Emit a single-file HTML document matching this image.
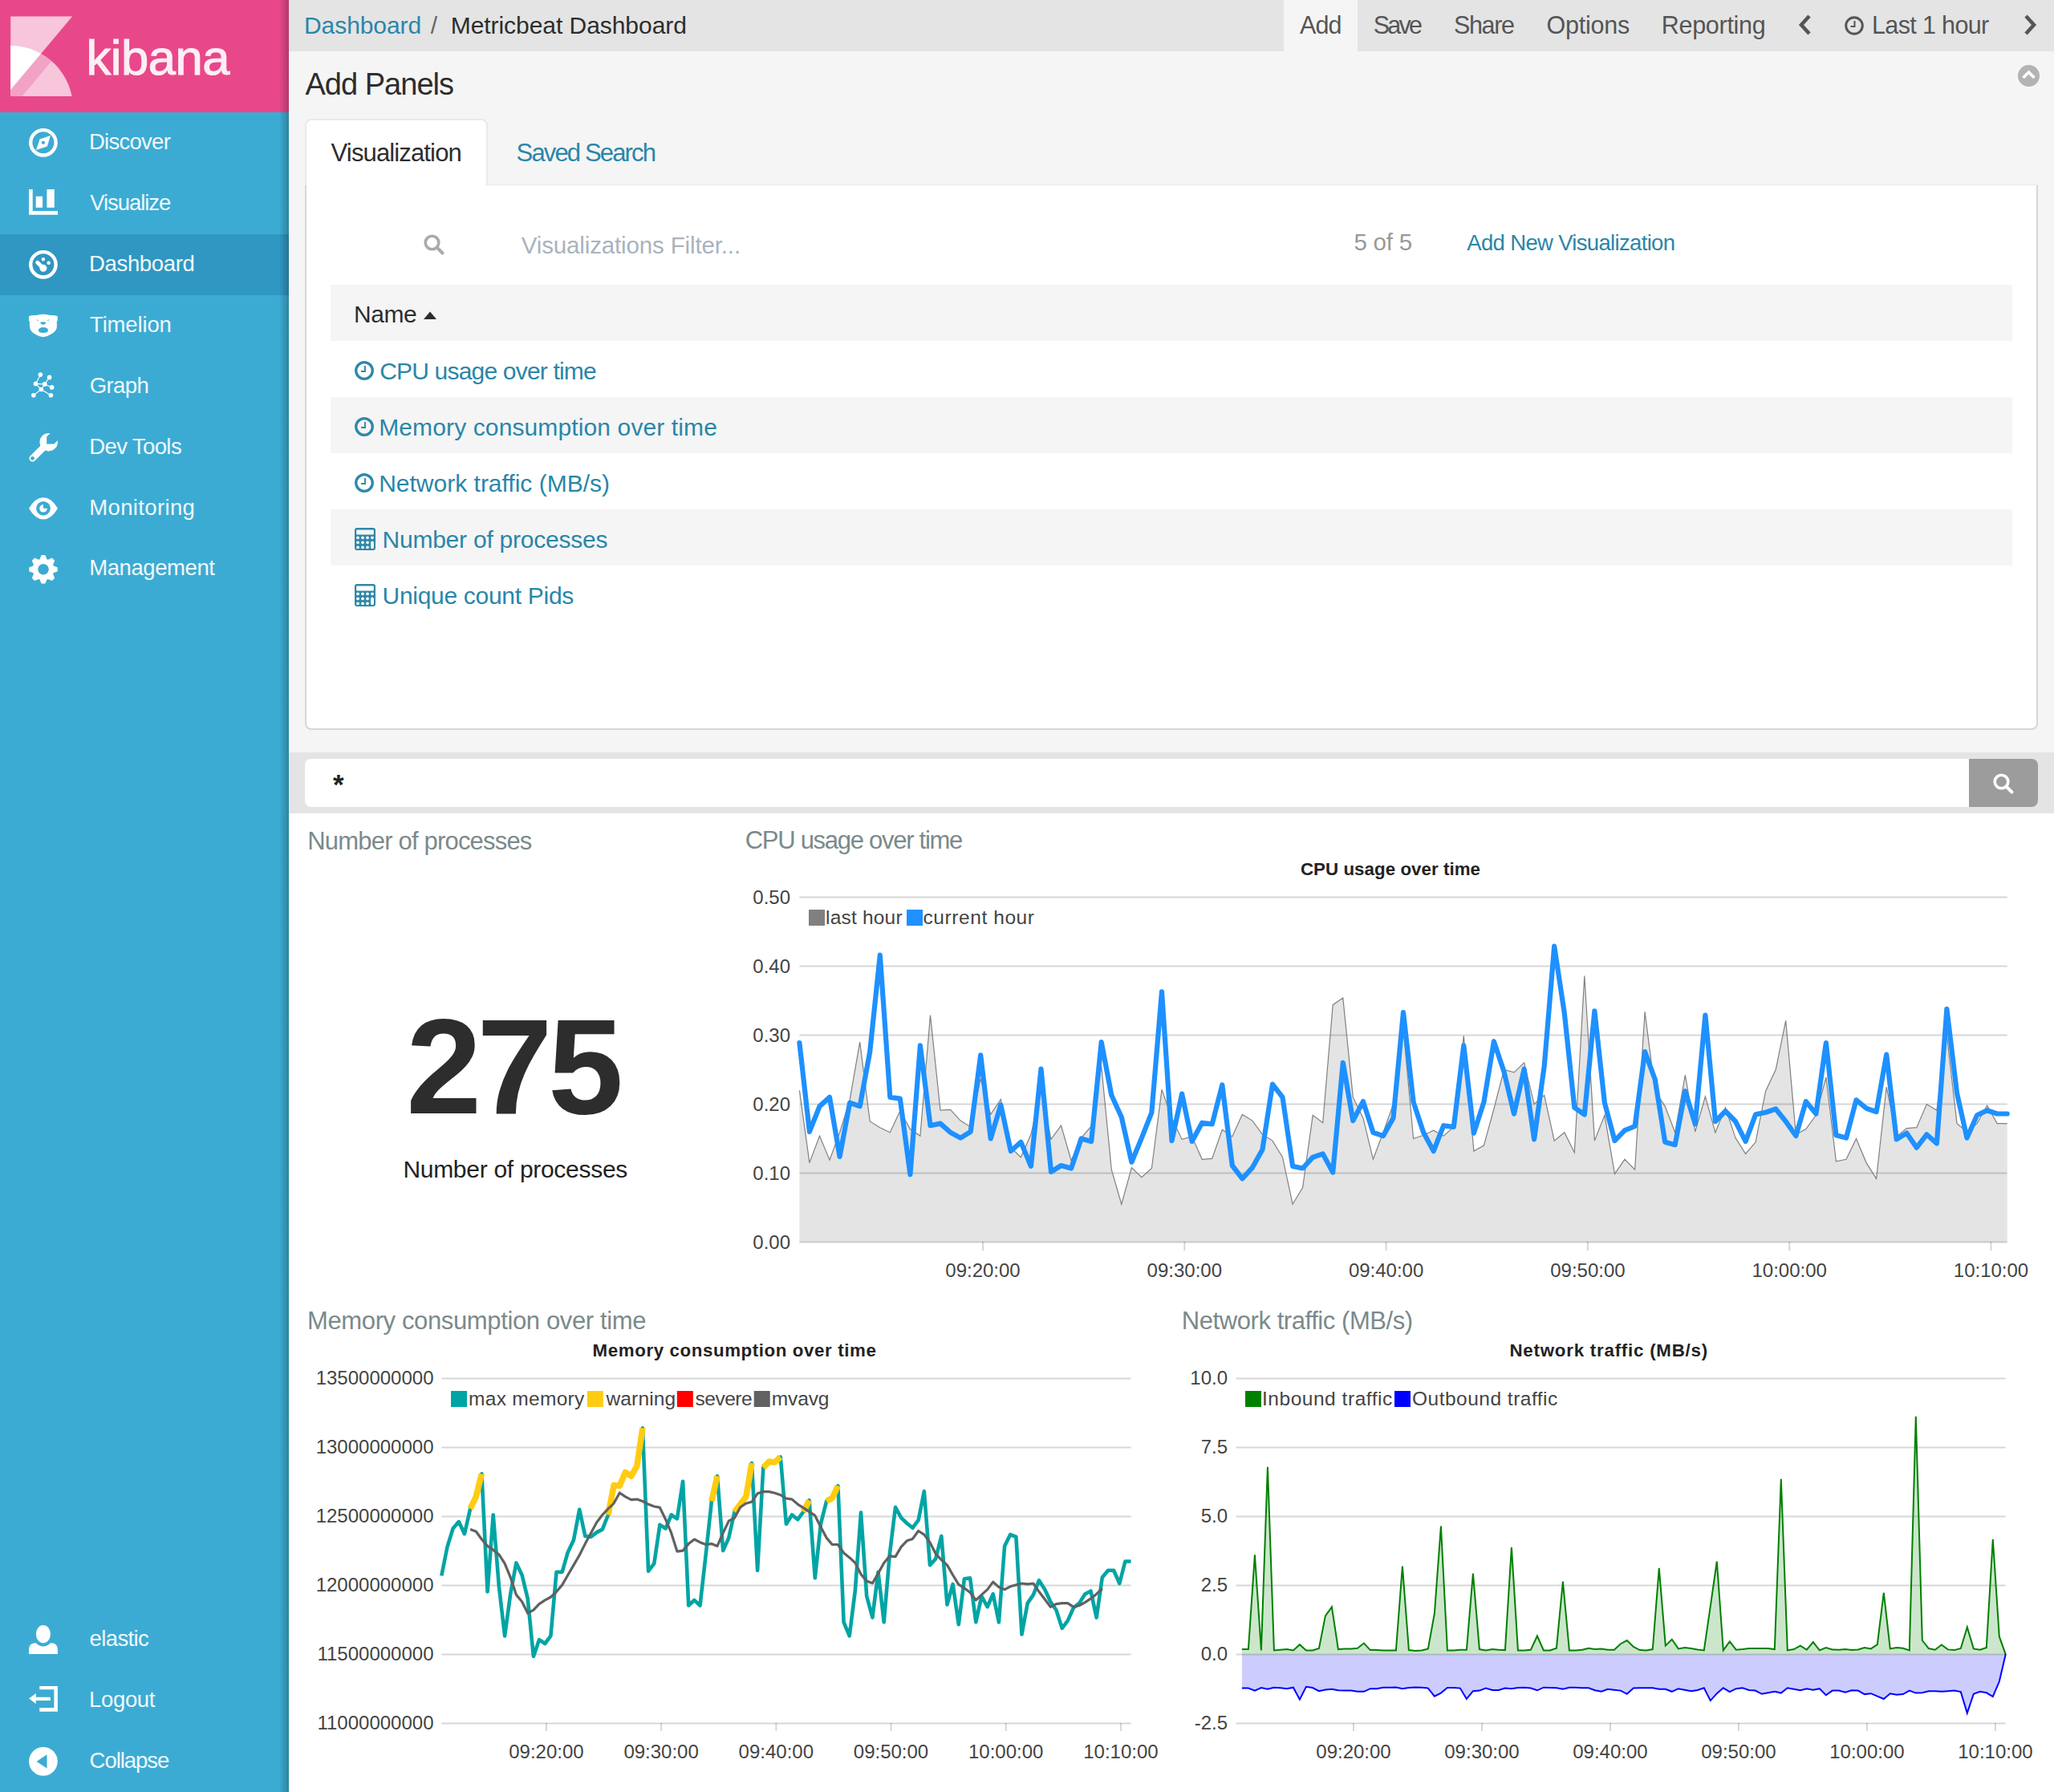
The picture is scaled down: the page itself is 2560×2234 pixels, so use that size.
<!DOCTYPE html>
<html><head><meta charset="utf-8">
<style>
*{box-sizing:border-box;margin:0;padding:0}
html,body{width:2560px;height:2234px;overflow:hidden;background:#fff;font-family:"Liberation Sans",sans-serif}
.a{position:absolute;white-space:nowrap;line-height:1}
.b{position:absolute}
svg{position:absolute;overflow:visible}
</style></head><body>
<div class="b" style="left:0;top:0;width:360px;height:2234px;background:#3cabd3"></div>
<div class="b" style="left:0;top:0;width:360px;height:140px;background:#e8488a"></div>
<div class="b" style="left:0;top:292px;width:360px;height:76px;background:#2f97c2"></div>
<svg style="left:0;top:0" width="100" height="140" viewBox="0 0 100 140">
  <defs><clipPath id="box"><rect x="13.1" y="20.2" width="77.2" height="99.8"/></clipPath>
  <clipPath id="arc"><circle cx="13.1" cy="135" r="78"/></clipPath></defs>
  <g clip-path="url(#box)">
    <polygon points="13.1,20.2 90.3,20.2 13.1,112.2" fill="#f7c6da"/>
    <g clip-path="url(#arc)">
      <rect x="13" y="20" width="80" height="100" fill="#f7c6da"/>
      <polygon points="13.1,20.2 90.3,20.2 13.1,112.2" fill="#ffffff"/>
      <polygon points="90.3,20.2 13.1,112.2 13.1,125 27.2,120.5 111,20.2" fill="#f2a3c5"/>
    </g>
  </g>
</svg>
<svg style="left:36px;top:160px" width="36" height="36" viewBox="0 0 36 36"><circle cx="17.9" cy="17.8" r="15.7" fill="none" stroke="#fff" stroke-width="4.4"/><path d="M26.9 9.04 L22.9 22.4 L9.07 26.9 L13.5 13.5 Z" fill="#fff"/><circle cx="17.9" cy="17.8" r="2.1" fill="#3cabd3"/></svg>
<svg style="left:36px;top:236px" width="36" height="36" viewBox="0 0 36 36"><path d="M0 0h4.7v27h31.3v4.7H0z" fill="#fff"/><rect x="8.7" y="8.8" width="8.4" height="14" fill="#fff"/><rect x="22.4" y="0" width="9.4" height="22.8" fill="#fff"/></svg>
<svg style="left:36px;top:312px" width="36" height="36" viewBox="0 0 36 36"><circle cx="17.9" cy="17.8" r="15.7" fill="none" stroke="#fff" stroke-width="4.4"/><path d="M10.7 15.3 L17.9 22.3" stroke="#fff" stroke-width="5" stroke-linecap="round"/><circle cx="17.9" cy="22.3" r="4.5" fill="#fff"/><circle cx="17.9" cy="11.3" r="2.2" fill="#fff"/><circle cx="24.7" cy="15.7" r="2.3" fill="#fff"/></svg>
<svg style="left:36px;top:392px" width="36" height="29" viewBox="0 0 36 29"><path d="M0 1.95 Q4.8 0.6 9.6 1.1 Q13.6 -0.3 17.7 -0.3 Q21.9 -0.3 26.1 1.1 Q30.9 0.6 35.6 1.95 L35.9 7 L34.5 10.3 L35 11.7 L34.7 17.3 Q32.5 22.5 26.9 25.1 Q22.3 28.2 17.7 28.2 Q13.1 28.2 8.5 25.1 Q3 22.5 1.25 17.3 L0.7 11.7 L1.1 10 L-0.1 7 Z" fill="#fff"/><path d="M11.9 19.4 Q12.5 15.9 17.95 15.9 Q23.4 15.9 24 19.4 Q24 22.9 17.95 22.9 Q11.9 22.9 11.9 19.4Z" fill="#3cabd3"/><path d="M14.1 9.8 Q17.8 8.8 21.5 9.8 Q20.5 12.8 17.8 12.8 Q15.1 12.8 14.1 9.8Z" fill="#3cabd3"/><path d="M9.3 6.2 Q11 6.3 12.4 7.6 Q10.6 8.5 9.3 6.2Z M25.8 6.2 Q24.1 6.3 22.7 7.6 Q24.5 8.5 25.8 6.2Z" fill="#3cabd3"/></svg>
<svg style="left:36px;top:464px" width="36" height="32" viewBox="0 0 36 32"><g stroke="#fff" stroke-width="1.1" fill="none"><path d="M14.4 3.1 L8.5 14.4 L15.3 21.5 L5.8 28.7 M19.7 14.9 L25.6 6.4 M19.7 14.9 L28.6 18.9 M8.5 14.4 L19.7 14.9 L15.3 21.5 L27.4 28.7"/></g><g fill="#fff"><circle cx="14.4" cy="3.1" r="2.8"/><circle cx="25.6" cy="6.4" r="2.8"/><circle cx="8.5" cy="14.4" r="2.8"/><circle cx="19.7" cy="14.9" r="2.8"/><circle cx="28.6" cy="18.9" r="2.8"/><circle cx="15.3" cy="21.5" r="2.8"/><circle cx="5.8" cy="28.7" r="2.8"/><circle cx="27.4" cy="28.7" r="2.8"/></g></svg>
<svg style="left:36px;top:540px" width="36" height="36" viewBox="0 0 36 36"><circle cx="24.7" cy="11.2" r="11.2" fill="#fff"/><path d="M24 12 L4.6 31.4" stroke="#fff" stroke-width="8.4" stroke-linecap="round"/><polygon points="22.2,13.4 31.4,13.4 51.4,-6.6 42.2,-15.5 22.2,4.5" fill="#3cabd3"/><circle cx="4.5" cy="31.4" r="2.4" fill="#3cabd3"/></svg>
<svg style="left:36px;top:620px" width="36" height="28" viewBox="0 0 36 28"><path d="M0 13.8 Q8 0.2 18 0.2 Q28 0.2 36 13.8 Q28 27.5 18 27.5 Q8 27.5 0 13.8 Z" fill="#fff"/><circle cx="18" cy="13.8" r="8.9" fill="#3cabd3"/><circle cx="18" cy="13.8" r="4.8" fill="#fff"/><path d="M18 13.8 V8 A5.8 5.8 0 0 1 23.8 13.8 Z" fill="#3cabd3"/><circle cx="21.3" cy="10.5" r="0.1" fill="#3cabd3"/></svg>
<svg style="left:36px;top:692px" width="36" height="36" viewBox="0 0 36 36"><path d="M13.49 5.18 L15.66 0.05 L20.34 0.05 L22.51 5.18 L23.73 5.69 L28.89 3.59 L32.21 6.91 L30.11 12.07 L30.62 13.29 L35.75 15.46 L35.75 20.14 L30.62 22.31 L30.11 23.53 L32.21 28.69 L28.89 32.01 L23.73 29.91 L22.51 30.42 L20.34 35.55 L15.66 35.55 L13.49 30.42 L12.27 29.91 L7.11 32.01 L3.79 28.69 L5.89 23.53 L5.38 22.31 L0.25 20.14 L0.25 15.46 L5.38 13.29 L5.89 12.07 L3.79 6.91 L7.11 3.59 L12.27 5.69 Z" fill="#fff"/><circle cx="18" cy="17.8" r="6.8" fill="#3cabd3"/></svg>
<svg style="left:36px;top:2026px" width="36" height="36" viewBox="0 0 36 36"><path d="M0 36 V30.6 Q0 22.2 8.4 22.2 H27.5 Q35.9 22.2 35.9 30.6 V36 Z" fill="#fff"/><ellipse cx="17.9" cy="11.2" rx="13" ry="15.2" fill="#3cabd3"/><ellipse cx="17.9" cy="11.2" rx="9" ry="11.2" fill="#fff"/></svg>
<svg style="left:36px;top:2102px" width="36" height="32" viewBox="0 0 36 32"><path d="M13.25 0 H35.9 V31.7 H13.25 V27.1 H31.4 V4.3 H13.25 Z" fill="#fff"/><path d="M0 15.5 L8.8 9.1 V13.7 H26.9 V17.9 H8.8 V21.9 Z" fill="#fff"/></svg>
<svg style="left:36px;top:2178px" width="36" height="36" viewBox="0 0 36 36"><circle cx="17.9" cy="17.9" r="17.9" fill="#fff"/><path d="M9.6 18 L22.5 9.2 V26.6 Z" fill="#3cabd3"/></svg>
<div class="b" style="left:348px;top:0;width:12px;height:2234px;background:linear-gradient(to right,rgba(0,0,0,0) 0%,rgba(0,0,0,0.12) 50%,rgba(0,0,0,0.23) 100%)"></div>
<div class="b" style="left:360px;top:0;width:2200px;height:64px;background:#e4e4e4"></div>
<div class="b" style="left:1600px;top:0;width:92px;height:64px;background:#f5f5f5"></div>
<svg style="left:2238px;top:18px" width="24" height="26" viewBox="0 0 24 26"><path d="M17 2 L7 13 L17 24" fill="none" stroke="#555" stroke-width="4.6"/></svg>
<svg style="left:2518px;top:18px" width="24" height="26" viewBox="0 0 24 26"><path d="M7 2 L17 13 L7 24" fill="none" stroke="#555" stroke-width="4.6"/></svg>
<svg style="left:2299px;top:20px" width="24" height="24" viewBox="0 0 24 24"><circle cx="12" cy="12" r="10.3" fill="none" stroke="#555" stroke-width="3"/><path d="M12.5 6 V13 H7.5" fill="none" stroke="#555" stroke-width="2"/></svg>
<div class="b" style="left:360px;top:64px;width:2200px;height:874px;background:#f5f5f5"></div>
<svg style="left:2515px;top:81px" width="27" height="27" viewBox="0 0 27 27"><circle cx="13.5" cy="13.5" r="13.5" fill="#b3b3b3"/><path d="M6.5 16 L13.5 9 L20.5 16" fill="none" stroke="#fff" stroke-width="3.6"/></svg>
<div class="b" style="left:380px;top:147.5px;width:227.5px;height:85px;background:#fff;border:2px solid #e6eaec;border-bottom:none;border-radius:8px 8px 0 0"></div>
<div class="b" style="left:605px;top:229.5px;width:1934px;height:2px;background:#e6eaec"></div>
<div class="b" style="left:380px;top:231px;width:2159.5px;height:679px;background:#fff;border:2px solid #d6d6d6;border-top:none;border-radius:0 0 8px 8px"></div>
<div class="b" style="left:382px;top:229px;width:223px;height:4px;background:#fff"></div>
<svg style="left:528px;top:292px" width="26" height="26" viewBox="0 0 26 26"><circle cx="10.5" cy="10.5" r="8.3" fill="none" stroke="#aaa" stroke-width="3.6"/><path d="M16.5 16.5 L23.5 23.5" stroke="#aaa" stroke-width="4" stroke-linecap="round"/></svg>
<div class="b" style="left:412px;top:355px;width:2096px;height:70px;background:#f5f5f5"></div>
<div class="b" style="left:412px;top:495px;width:2096px;height:70px;background:#f5f5f5"></div>
<div class="b" style="left:412px;top:635px;width:2096px;height:70px;background:#f5f5f5"></div>
<svg style="left:528px;top:388px" width="16" height="10" viewBox="0 0 16 10"><path d="M0 10 L8 0.5 L16 10 Z" fill="#2d2d2d"/></svg>
<svg style="left:442px;top:450px" width="24" height="24" viewBox="0 0 24 24"><circle cx="12" cy="12" r="10.3" fill="none" stroke="#2e88a9" stroke-width="3.3"/><path d="M13 6 V13 H8" fill="none" stroke="#2e88a9" stroke-width="1.9"/></svg>
<svg style="left:442px;top:520.2px" width="24" height="24" viewBox="0 0 24 24"><circle cx="12" cy="12" r="10.3" fill="none" stroke="#2e88a9" stroke-width="3.3"/><path d="M13 6 V13 H8" fill="none" stroke="#2e88a9" stroke-width="1.9"/></svg>
<svg style="left:442px;top:590.3px" width="24" height="24" viewBox="0 0 24 24"><circle cx="12" cy="12" r="10.3" fill="none" stroke="#2e88a9" stroke-width="3.3"/><path d="M13 6 V13 H8" fill="none" stroke="#2e88a9" stroke-width="1.9"/></svg>
<svg style="left:442px;top:658px" width="26" height="28" viewBox="0 0 26 28"><rect x="0" y="0" width="26" height="28" rx="3" fill="#2e88a9"/><rect x="2.2" y="2.5" width="21.6" height="6" rx="0.8" fill="#f5f5f5"/><circle cx="4.0" cy="12.3" r="1.9" fill="#f5f5f5"/><circle cx="10.0" cy="12.3" r="1.9" fill="#f5f5f5"/><circle cx="16.0" cy="12.3" r="1.9" fill="#f5f5f5"/><circle cx="4.0" cy="18.3" r="1.9" fill="#f5f5f5"/><circle cx="10.0" cy="18.3" r="1.9" fill="#f5f5f5"/><circle cx="16.0" cy="18.3" r="1.9" fill="#f5f5f5"/><circle cx="4.0" cy="24.3" r="1.9" fill="#f5f5f5"/><circle cx="10.0" cy="24.3" r="1.9" fill="#f5f5f5"/><circle cx="16.0" cy="24.3" r="1.9" fill="#f5f5f5"/><rect x="20.1" y="10.4" width="3.8" height="3.8" rx="1.9" fill="#f5f5f5"/><rect x="20.1" y="16.4" width="3.8" height="9.8" rx="1.9" fill="#f5f5f5"/></svg>
<svg style="left:442px;top:728px" width="26" height="28" viewBox="0 0 26 28"><rect x="0" y="0" width="26" height="28" rx="3" fill="#2e88a9"/><rect x="2.2" y="2.5" width="21.6" height="6" rx="0.8" fill="#ffffff"/><circle cx="4.0" cy="12.3" r="1.9" fill="#ffffff"/><circle cx="10.0" cy="12.3" r="1.9" fill="#ffffff"/><circle cx="16.0" cy="12.3" r="1.9" fill="#ffffff"/><circle cx="4.0" cy="18.3" r="1.9" fill="#ffffff"/><circle cx="10.0" cy="18.3" r="1.9" fill="#ffffff"/><circle cx="16.0" cy="18.3" r="1.9" fill="#ffffff"/><circle cx="4.0" cy="24.3" r="1.9" fill="#ffffff"/><circle cx="10.0" cy="24.3" r="1.9" fill="#ffffff"/><circle cx="16.0" cy="24.3" r="1.9" fill="#ffffff"/><rect x="20.1" y="10.4" width="3.8" height="3.8" rx="1.9" fill="#ffffff"/><rect x="20.1" y="16.4" width="3.8" height="9.8" rx="1.9" fill="#ffffff"/></svg>
<div class="b" style="left:360px;top:938px;width:2200px;height:76px;background:#e4e4e4"></div>
<div class="b" style="left:380px;top:946px;width:2074px;height:60px;background:#fff;border-radius:8px 0 0 8px"></div>
<div class="b" style="left:2454px;top:946px;width:86px;height:60px;background:#9c9c9c;border-radius:0 8px 8px 0"></div>
<svg style="left:2484px;top:964px" width="26" height="26" viewBox="0 0 26 26"><circle cx="10.5" cy="10.5" r="8.3" fill="none" stroke="#fff" stroke-width="3.6"/><path d="M16.5 16.5 L23.5 23.5" stroke="#fff" stroke-width="4" stroke-linecap="round"/></svg>
<div class="a" style="left:415px;top:960px;font-size:35px;font-weight:bold;color:#222">*</div>
<div class="a" style="left:111.0px;top:163.3px;font-size:27.5px;color:#f0f8fb;letter-spacing:-0.74px">Discover</div>
<div class="a" style="left:112.2px;top:238.7px;font-size:27.5px;color:#f0f8fb;letter-spacing:-1.06px">Visualize</div>
<div class="a" style="left:111.0px;top:314.9px;font-size:27.5px;color:#f0f8fb;letter-spacing:-0.34px">Dashboard</div>
<div class="a" style="left:112.0px;top:390.7px;font-size:27.5px;color:#f0f8fb;letter-spacing:-0.14px">Timelion</div>
<div class="a" style="left:111.7px;top:467.0px;font-size:27.5px;color:#f0f8fb;letter-spacing:-0.58px">Graph</div>
<div class="a" style="left:111.2px;top:542.7px;font-size:27.5px;color:#f0f8fb;letter-spacing:-0.60px">Dev Tools</div>
<div class="a" style="left:111.2px;top:618.5px;font-size:27.5px;color:#f0f8fb;letter-spacing:0.37px">Monitoring</div>
<div class="a" style="left:111.2px;top:694.3px;font-size:27.5px;color:#f0f8fb;letter-spacing:-0.42px">Management</div>
<div class="a" style="left:111.6px;top:2028.6px;font-size:27.5px;color:#f0f8fb;letter-spacing:-0.63px">elastic</div>
<div class="a" style="left:111.0px;top:2104.5px;font-size:27.5px;color:#f0f8fb;letter-spacing:-0.33px">Logout</div>
<div class="a" style="left:111.6px;top:2180.5px;font-size:27.5px;color:#f0f8fb;letter-spacing:-1.06px">Collapse</div>
<div class="a" style="left:107.6px;top:40.9px;font-size:61.5px;color:#fdeef4;letter-spacing:-0.48px;-webkit-text-stroke:1.1px #fdeef4">kibana</div>
<div class="a" style="left:379.0px;top:16.8px;font-size:30px;color:#2a86a9;letter-spacing:-0.07px">Dashboard</div>
<div class="a" style="left:536.7px;top:16.8px;font-size:30px;color:#666;letter-spacing:0.30px">/</div>
<div class="a" style="left:561.7px;top:16.8px;font-size:30px;color:#2d2d2d;letter-spacing:-0.05px">Metricbeat Dashboard</div>
<div class="a" style="left:1620.0px;top:16.4px;font-size:30.5px;color:#555;letter-spacing:-0.90px">Add</div>
<div class="a" style="left:1711.7px;top:16.4px;font-size:30.5px;color:#555;letter-spacing:-2.75px">Save</div>
<div class="a" style="left:1812.0px;top:16.4px;font-size:30.5px;color:#555;letter-spacing:-1.36px">Share</div>
<div class="a" style="left:1927.6px;top:16.4px;font-size:30.5px;color:#555;letter-spacing:-0.24px">Options</div>
<div class="a" style="left:2070.7px;top:16.4px;font-size:30.5px;color:#555;letter-spacing:-0.27px">Reporting</div>
<div class="a" style="left:2333.0px;top:16.4px;font-size:30.5px;color:#555;letter-spacing:-0.64px">Last 1 hour</div>
<div class="a" style="left:380.5px;top:86.4px;font-size:38px;color:#2d2d2d;letter-spacing:-0.98px">Add Panels</div>
<div class="a" style="left:412.6px;top:174.6px;font-size:31px;color:#2d2d2d;letter-spacing:-0.86px">Visualization</div>
<div class="a" style="left:643.6px;top:174.6px;font-size:31px;color:#2a86a9;letter-spacing:-1.85px">Saved Search</div>
<div class="a" style="left:649.8px;top:290.8px;font-size:29.5px;color:#a9b3bd;letter-spacing:-0.14px">Visualizations Filter...</div>
<div class="a" style="left:1687.5px;top:286.8px;font-size:29.5px;color:#999;letter-spacing:-0.24px">5 of 5</div>
<div class="a" style="left:1828.3px;top:288.5px;font-size:27.5px;color:#2a86a9;letter-spacing:-0.67px">Add New Visualization</div>
<div class="a" style="left:441.0px;top:376.8px;font-size:30px;color:#2d2d2d;letter-spacing:-0.45px">Name</div>
<div class="a" style="left:473.2px;top:447.5px;font-size:30px;color:#2a86a9;letter-spacing:-0.81px">CPU usage over time</div>
<div class="a" style="left:472.2px;top:517.6px;font-size:30px;color:#2a86a9;letter-spacing:0.12px">Memory consumption over time</div>
<div class="a" style="left:472.2px;top:587.7px;font-size:30px;color:#2a86a9;letter-spacing:-0.00px">Network traffic (MB/s)</div>
<div class="a" style="left:476.5px;top:657.8px;font-size:30px;color:#2a86a9;letter-spacing:-0.23px">Number of processes</div>
<div class="a" style="left:476.5px;top:727.8px;font-size:30px;color:#2a86a9;letter-spacing:-0.29px">Unique count Pids</div>
<div class="a" style="left:383.3px;top:1032.6px;font-size:31px;color:#7b8a8b;letter-spacing:-0.81px">Number of processes</div>
<div class="a" style="left:928.7px;top:1032.2px;font-size:31px;color:#7b8a8b;letter-spacing:-1.28px">CPU usage over time</div>
<div class="a" style="left:383.0px;top:1631.3px;font-size:31px;color:#7b8a8b;letter-spacing:-0.37px">Memory consumption over time</div>
<div class="a" style="left:1472.8px;top:1631.3px;font-size:31px;color:#7b8a8b;letter-spacing:-0.43px">Network traffic (MB/s)</div>
<div class="a" style="left:506.2px;top:1244.8px;font-size:169px;color:#2d2d2d;letter-spacing:-5.59px;font-weight:bold">275</div>
<div class="a" style="left:502.4px;top:1442.8px;font-size:30px;color:#222;letter-spacing:-0.29px">Number of processes</div>
<div class="a" style="left:1620.9px;top:1072.7px;font-size:22.3px;color:#222;letter-spacing:0.06px;font-weight:bold">CPU usage over time</div>
<div class="a" style="left:738.6px;top:1673.3px;font-size:22.3px;color:#222;letter-spacing:0.60px;font-weight:bold">Memory consumption over time</div>
<div class="a" style="left:1881.5px;top:1673.3px;font-size:22.3px;color:#222;letter-spacing:0.77px;font-weight:bold">Network traffic (MB/s)</div>
<div class="a" style="left:1029.0px;top:1131.6px;font-size:24.5px;color:#444;letter-spacing:0.20px">last hour</div>
<div class="a" style="left:1150.5px;top:1131.6px;font-size:24.5px;color:#444;letter-spacing:0.58px">current hour</div>
<div class="a" style="left:584.0px;top:1731.6px;font-size:24.5px;color:#444;letter-spacing:0.30px">max memory</div>
<div class="a" style="left:755.5px;top:1731.6px;font-size:24.5px;color:#444;letter-spacing:0.15px">warning</div>
<div class="a" style="left:866.5px;top:1731.6px;font-size:24.5px;color:#444;letter-spacing:-0.50px">severe</div>
<div class="a" style="left:961.8px;top:1731.6px;font-size:24.5px;color:#444;letter-spacing:-0.13px">mvavg</div>
<div class="a" style="left:1573.0px;top:1731.6px;font-size:24.5px;color:#444;letter-spacing:0.53px">Inbound traffic</div>
<div class="a" style="left:1760.0px;top:1731.6px;font-size:24.5px;color:#444;letter-spacing:0.49px">Outbound traffic</div><svg style="left:0;top:0" width="2560" height="2234" viewBox="0 0 2560 2234" font-family="Liberation Sans">
<polygon points="996.4,1548.5 996.4,1359.3 1008.9,1449.6 1021.5,1416.1 1034.0,1446.2 1046.6,1411.8 1059.1,1371.3 1071.7,1299.1 1084.2,1398.0 1096.8,1405.7 1109.3,1411.8 1121.8,1385.1 1134.4,1407.5 1146.9,1416.1 1159.5,1265.6 1172.0,1384.2 1184.6,1383.4 1197.1,1397.1 1209.7,1404.9 1222.2,1344.7 1234.7,1389.4 1247.3,1370.5 1259.8,1430.7 1272.4,1442.7 1284.9,1414.3 1297.5,1359.3 1310.0,1420.4 1322.5,1403.2 1335.1,1447.0 1347.6,1418.6 1360.2,1404.0 1372.7,1329.2 1385.3,1458.2 1397.8,1501.2 1410.4,1455.6 1422.9,1467.7 1435.4,1456.5 1448.0,1358.4 1460.5,1393.7 1473.1,1420.4 1485.6,1416.9 1498.2,1445.3 1510.7,1444.4 1523.3,1408.3 1535.8,1416.9 1548.3,1389.4 1560.9,1397.1 1573.4,1414.3 1586.0,1422.1 1598.5,1442.7 1611.1,1501.2 1623.6,1480.6 1636.2,1390.3 1648.7,1399.7 1661.2,1252.7 1673.8,1244.1 1686.3,1367.9 1698.9,1393.7 1711.4,1445.3 1724.0,1411.8 1736.5,1376.5 1749.0,1281.9 1761.6,1419.5 1774.1,1415.2 1786.7,1409.2 1799.2,1416.1 1811.8,1404.9 1824.3,1291.4 1836.9,1435.0 1849.4,1428.1 1861.9,1382.5 1874.5,1333.5 1887.0,1336.9 1899.6,1324.9 1912.1,1376.5 1924.7,1365.3 1937.2,1422.1 1949.8,1411.8 1962.3,1436.7 1974.8,1216.5 1987.4,1422.1 1999.9,1390.3 2012.5,1463.4 2025.0,1445.3 2037.6,1458.2 2050.1,1261.3 2062.7,1360.2 2075.2,1379.1 2087.7,1411.8 2100.3,1340.4 2112.8,1410.9 2125.4,1367.0 2137.9,1411.8 2150.5,1380.8 2163.0,1418.6 2175.6,1438.4 2188.1,1423.8 2200.6,1360.2 2213.2,1333.5 2225.7,1272.4 2238.3,1414.3 2250.8,1407.5 2263.4,1390.3 2275.9,1343.0 2288.4,1447.9 2301.0,1445.3 2313.5,1419.5 2326.1,1449.6 2338.6,1469.4 2351.2,1355.0 2363.7,1416.9 2376.3,1406.6 2388.8,1405.7 2401.3,1376.5 2413.9,1384.2 2426.4,1290.5 2439.0,1400.6 2451.5,1410.9 2464.1,1400.6 2476.6,1378.2 2489.2,1400.6 2501.7,1400.6 2501.7,1548.5" fill="#e4e4e4"/>
<line x1="996.4" y1="1548.5" x2="2501.7" y2="1548.5" stroke="rgba(0,0,0,0.16)" stroke-width="2"/>
<text x="985" y="1556.5" font-size="24" fill="#444" text-anchor="end">0.00</text>
<line x1="996.4" y1="1462.5" x2="2501.7" y2="1462.5" stroke="rgba(0,0,0,0.16)" stroke-width="2"/>
<text x="985" y="1470.5" font-size="24" fill="#444" text-anchor="end">0.10</text>
<line x1="996.4" y1="1376.5" x2="2501.7" y2="1376.5" stroke="rgba(0,0,0,0.16)" stroke-width="2"/>
<text x="985" y="1384.5" font-size="24" fill="#444" text-anchor="end">0.20</text>
<line x1="996.4" y1="1290.5" x2="2501.7" y2="1290.5" stroke="rgba(0,0,0,0.16)" stroke-width="2"/>
<text x="985" y="1298.5" font-size="24" fill="#444" text-anchor="end">0.30</text>
<line x1="996.4" y1="1204.5" x2="2501.7" y2="1204.5" stroke="rgba(0,0,0,0.16)" stroke-width="2"/>
<text x="985" y="1212.5" font-size="24" fill="#444" text-anchor="end">0.40</text>
<line x1="996.4" y1="1118.5" x2="2501.7" y2="1118.5" stroke="rgba(0,0,0,0.16)" stroke-width="2"/>
<text x="985" y="1126.5" font-size="24" fill="#444" text-anchor="end">0.50</text>
<line x1="1225.0" y1="1548" x2="1225.0" y2="1559" stroke="rgba(0,0,0,0.16)" stroke-width="2"/>
<text x="1225.0" y="1591.5" font-size="24" fill="#444" text-anchor="middle">09:20:00</text>
<line x1="1476.3" y1="1548" x2="1476.3" y2="1559" stroke="rgba(0,0,0,0.16)" stroke-width="2"/>
<text x="1476.3" y="1591.5" font-size="24" fill="#444" text-anchor="middle">09:30:00</text>
<line x1="1727.6" y1="1548" x2="1727.6" y2="1559" stroke="rgba(0,0,0,0.16)" stroke-width="2"/>
<text x="1727.6" y="1591.5" font-size="24" fill="#444" text-anchor="middle">09:40:00</text>
<line x1="1978.9" y1="1548" x2="1978.9" y2="1559" stroke="rgba(0,0,0,0.16)" stroke-width="2"/>
<text x="1978.9" y="1591.5" font-size="24" fill="#444" text-anchor="middle">09:50:00</text>
<line x1="2230.2" y1="1548" x2="2230.2" y2="1559" stroke="rgba(0,0,0,0.16)" stroke-width="2"/>
<text x="2230.2" y="1591.5" font-size="24" fill="#444" text-anchor="middle">10:00:00</text>
<line x1="2481.5" y1="1548" x2="2481.5" y2="1559" stroke="rgba(0,0,0,0.16)" stroke-width="2"/>
<text x="2481.5" y="1591.5" font-size="24" fill="#444" text-anchor="middle">10:10:00</text>
<polyline points="996.4,1359.3 1008.9,1449.6 1021.5,1416.1 1034.0,1446.2 1046.6,1411.8 1059.1,1371.3 1071.7,1299.1 1084.2,1398.0 1096.8,1405.7 1109.3,1411.8 1121.8,1385.1 1134.4,1407.5 1146.9,1416.1 1159.5,1265.6 1172.0,1384.2 1184.6,1383.4 1197.1,1397.1 1209.7,1404.9 1222.2,1344.7 1234.7,1389.4 1247.3,1370.5 1259.8,1430.7 1272.4,1442.7 1284.9,1414.3 1297.5,1359.3 1310.0,1420.4 1322.5,1403.2 1335.1,1447.0 1347.6,1418.6 1360.2,1404.0 1372.7,1329.2 1385.3,1458.2 1397.8,1501.2 1410.4,1455.6 1422.9,1467.7 1435.4,1456.5 1448.0,1358.4 1460.5,1393.7 1473.1,1420.4 1485.6,1416.9 1498.2,1445.3 1510.7,1444.4 1523.3,1408.3 1535.8,1416.9 1548.3,1389.4 1560.9,1397.1 1573.4,1414.3 1586.0,1422.1 1598.5,1442.7 1611.1,1501.2 1623.6,1480.6 1636.2,1390.3 1648.7,1399.7 1661.2,1252.7 1673.8,1244.1 1686.3,1367.9 1698.9,1393.7 1711.4,1445.3 1724.0,1411.8 1736.5,1376.5 1749.0,1281.9 1761.6,1419.5 1774.1,1415.2 1786.7,1409.2 1799.2,1416.1 1811.8,1404.9 1824.3,1291.4 1836.9,1435.0 1849.4,1428.1 1861.9,1382.5 1874.5,1333.5 1887.0,1336.9 1899.6,1324.9 1912.1,1376.5 1924.7,1365.3 1937.2,1422.1 1949.8,1411.8 1962.3,1436.7 1974.8,1216.5 1987.4,1422.1 1999.9,1390.3 2012.5,1463.4 2025.0,1445.3 2037.6,1458.2 2050.1,1261.3 2062.7,1360.2 2075.2,1379.1 2087.7,1411.8 2100.3,1340.4 2112.8,1410.9 2125.4,1367.0 2137.9,1411.8 2150.5,1380.8 2163.0,1418.6 2175.6,1438.4 2188.1,1423.8 2200.6,1360.2 2213.2,1333.5 2225.7,1272.4 2238.3,1414.3 2250.8,1407.5 2263.4,1390.3 2275.9,1343.0 2288.4,1447.9 2301.0,1445.3 2313.5,1419.5 2326.1,1449.6 2338.6,1469.4 2351.2,1355.0 2363.7,1416.9 2376.3,1406.6 2388.8,1405.7 2401.3,1376.5 2413.9,1384.2 2426.4,1290.5 2439.0,1400.6 2451.5,1410.9 2464.1,1400.6 2476.6,1378.2 2489.2,1400.6 2501.7,1400.6" fill="none" stroke="#808080" stroke-width="1.2"/>
<polyline points="996.4,1300.0 1008.9,1410.9 1021.5,1379.1 1034.0,1367.9 1046.6,1441.9 1059.1,1374.8 1071.7,1379.1 1084.2,1311.1 1096.8,1190.7 1109.3,1367.9 1121.8,1369.6 1134.4,1464.2 1146.9,1303.4 1159.5,1403.2 1172.0,1400.6 1184.6,1411.8 1197.1,1418.6 1209.7,1410.9 1222.2,1315.4 1234.7,1419.5 1247.3,1377.4 1259.8,1435.0 1272.4,1423.8 1284.9,1453.9 1297.5,1332.6 1310.0,1460.8 1322.5,1453.0 1335.1,1456.5 1347.6,1419.5 1360.2,1422.9 1372.7,1299.1 1385.3,1365.3 1397.8,1392.8 1410.4,1448.7 1422.9,1418.6 1435.4,1386.8 1448.0,1236.3 1460.5,1422.1 1473.1,1363.6 1485.6,1422.9 1498.2,1399.7 1510.7,1401.4 1523.3,1352.4 1535.8,1453.0 1548.3,1469.4 1560.9,1455.6 1573.4,1433.3 1586.0,1351.6 1598.5,1367.9 1611.1,1453.9 1623.6,1456.5 1636.2,1442.7 1648.7,1438.4 1661.2,1461.6 1673.8,1324.9 1686.3,1397.1 1698.9,1373.1 1711.4,1411.8 1724.0,1416.1 1736.5,1393.7 1749.0,1262.1 1761.6,1373.9 1774.1,1411.8 1786.7,1435.0 1799.2,1403.2 1811.8,1404.9 1824.3,1303.4 1836.9,1412.6 1849.4,1373.9 1861.9,1298.2 1874.5,1336.1 1887.0,1388.5 1899.6,1332.6 1912.1,1420.4 1924.7,1329.2 1937.2,1179.6 1949.8,1263.0 1962.3,1380.8 1974.8,1389.4 1987.4,1260.4 1999.9,1374.8 2012.5,1422.1 2025.0,1409.2 2037.6,1404.0 2050.1,1311.1 2062.7,1345.5 2075.2,1423.8 2087.7,1427.2 2100.3,1360.2 2112.8,1401.4 2125.4,1265.6 2137.9,1398.0 2150.5,1385.1 2163.0,1398.0 2175.6,1422.9 2188.1,1389.4 2200.6,1386.8 2213.2,1382.5 2225.7,1398.0 2238.3,1416.1 2250.8,1373.1 2263.4,1388.5 2275.9,1300.0 2288.4,1415.2 2301.0,1418.6 2313.5,1371.3 2326.1,1381.7 2338.6,1386.0 2351.2,1314.6 2363.7,1420.4 2376.3,1412.6 2388.8,1430.7 2401.3,1414.3 2413.9,1425.5 2426.4,1257.8 2439.0,1362.7 2451.5,1418.6 2464.1,1390.3 2476.6,1384.2 2489.2,1388.5 2501.7,1388.5" fill="none" stroke="#1e90ff" stroke-width="6.2" stroke-linejoin="round" stroke-linecap="round"/>
<rect x="1008" y="1134" width="20" height="20" fill="#808080"/>
<rect x="1130" y="1134" width="20" height="20" fill="#1e90ff"/>
<line x1="550.3" y1="1718.4" x2="1409.6" y2="1718.4" stroke="rgba(0,0,0,0.16)" stroke-width="2"/>
<text x="540.5" y="1725.9" font-size="24" fill="#444" text-anchor="end">13500000000</text>
<line x1="550.3" y1="1804.4" x2="1409.6" y2="1804.4" stroke="rgba(0,0,0,0.16)" stroke-width="2"/>
<text x="540.5" y="1811.9" font-size="24" fill="#444" text-anchor="end">13000000000</text>
<line x1="550.3" y1="1890.4" x2="1409.6" y2="1890.4" stroke="rgba(0,0,0,0.16)" stroke-width="2"/>
<text x="540.5" y="1897.9" font-size="24" fill="#444" text-anchor="end">12500000000</text>
<line x1="550.3" y1="1976.4" x2="1409.6" y2="1976.4" stroke="rgba(0,0,0,0.16)" stroke-width="2"/>
<text x="540.5" y="1983.9" font-size="24" fill="#444" text-anchor="end">12000000000</text>
<line x1="550.3" y1="2062.4" x2="1409.6" y2="2062.4" stroke="rgba(0,0,0,0.16)" stroke-width="2"/>
<text x="540.5" y="2069.9" font-size="24" fill="#444" text-anchor="end">11500000000</text>
<line x1="550.3" y1="2148.4" x2="1409.6" y2="2148.4" stroke="rgba(0,0,0,0.16)" stroke-width="2"/>
<text x="540.5" y="2155.9" font-size="24" fill="#444" text-anchor="end">11000000000</text>
<line x1="680.9" y1="2148" x2="680.9" y2="2158" stroke="rgba(0,0,0,0.16)" stroke-width="2"/>
<text x="680.9" y="2191.5" font-size="24" fill="#444" text-anchor="middle">09:20:00</text>
<line x1="824.0999999999999" y1="2148" x2="824.0999999999999" y2="2158" stroke="rgba(0,0,0,0.16)" stroke-width="2"/>
<text x="824.0999999999999" y="2191.5" font-size="24" fill="#444" text-anchor="middle">09:30:00</text>
<line x1="967.3" y1="2148" x2="967.3" y2="2158" stroke="rgba(0,0,0,0.16)" stroke-width="2"/>
<text x="967.3" y="2191.5" font-size="24" fill="#444" text-anchor="middle">09:40:00</text>
<line x1="1110.5" y1="2148" x2="1110.5" y2="2158" stroke="rgba(0,0,0,0.16)" stroke-width="2"/>
<text x="1110.5" y="2191.5" font-size="24" fill="#444" text-anchor="middle">09:50:00</text>
<line x1="1253.6999999999998" y1="2148" x2="1253.6999999999998" y2="2158" stroke="rgba(0,0,0,0.16)" stroke-width="2"/>
<text x="1253.6999999999998" y="2191.5" font-size="24" fill="#444" text-anchor="middle">10:00:00</text>
<line x1="1396.9" y1="2148" x2="1396.9" y2="2158" stroke="rgba(0,0,0,0.16)" stroke-width="2"/>
<text x="1396.9" y="2191.5" font-size="24" fill="#444" text-anchor="middle">10:10:00</text>
<polyline points="550.3,1964.4 557.5,1928.4 564.6,1905.5 571.8,1897.1 578.9,1912.2 586.1,1880.9 593.3,1865.8 600.4,1837.3 607.6,1984.3 614.7,1888.5 621.9,1977.8 629.1,2039.4 636.2,1987.2 643.4,1948.4 650.6,1963.5 657.7,1992.9 664.9,2065.0 672.0,2044.2 679.2,2049.0 686.4,2039.4 693.5,1959.7 700.7,1959.7 707.8,1934.9 715.0,1919.8 722.2,1881.8 729.3,1915.0 736.5,1916.0 743.6,1910.4 750.8,1906.6 758.0,1888.5 765.1,1851.5 772.3,1852.4 779.4,1835.4 786.6,1840.2 793.8,1827.8 800.9,1780.3 808.1,1958.7 815.3,1949.2 822.4,1900.9 829.6,1905.5 836.7,1888.5 843.9,1893.3 851.1,1846.7 858.2,2001.5 865.4,1994.8 872.5,2001.5 879.7,1937.9 886.9,1871.5 894.0,1840.2 901.2,1933.1 908.3,1917.1 915.5,1884.7 922.7,1875.3 929.8,1865.8 937.0,1824.0 944.1,1957.8 951.3,1829.7 958.5,1822.1 965.6,1823.0 972.8,1816.4 979.9,1899.9 987.1,1888.5 994.3,1894.2 1001.4,1884.7 1008.6,1870.4 1015.8,1967.3 1022.9,1899.9 1030.1,1871.5 1037.2,1867.7 1044.4,1852.4 1051.6,2022.3 1058.7,2039.4 1065.9,1982.4 1073.0,1885.6 1080.2,1990.0 1087.4,2016.5 1094.5,1959.7 1101.7,2022.3 1108.8,1937.9 1116.0,1879.0 1123.2,1892.1 1130.3,1899.0 1137.5,1904.7 1144.6,1895.2 1151.8,1859.1 1159.0,1951.1 1166.1,1943.5 1173.3,1915.0 1180.5,2000.5 1187.6,1974.9 1194.8,2025.2 1201.9,1968.3 1209.1,1967.3 1216.3,2022.3 1223.4,1990.0 1230.6,2003.2 1237.7,1987.2 1244.9,2022.3 1252.1,1927.4 1259.2,1913.1 1266.4,1916.0 1273.5,2037.5 1280.7,1998.6 1287.9,1988.1 1295.0,1970.2 1302.2,1981.6 1309.3,1996.7 1316.5,2007.2 1323.7,2029.9 1330.8,2020.4 1338.0,2004.3 1345.2,1998.6 1352.3,1987.2 1359.5,1983.5 1366.6,2016.6 1373.8,1966.4 1381.0,1957.8 1388.1,1957.8 1395.3,1974.0 1402.4,1946.5 1409.6,1946.5" fill="none" stroke="#01a4a4" stroke-width="4.6" stroke-linejoin="round"/>
<polyline points="586.1,1880.9 593.3,1865.8 600.4,1837.3" fill="none" stroke="#ffcc11" stroke-width="7.6" stroke-linejoin="round"/>
<polyline points="758.0,1888.5 765.1,1851.5 772.3,1852.4 779.4,1835.4 786.6,1840.2 793.8,1827.8 800.9,1780.3" fill="none" stroke="#ffcc11" stroke-width="7.6" stroke-linejoin="round"/>
<polyline points="886.9,1871.5 894.0,1840.2" fill="none" stroke="#ffcc11" stroke-width="7.6" stroke-linejoin="round"/>
<polyline points="915.5,1884.7 922.7,1875.3 929.8,1865.8 937.0,1824.0" fill="none" stroke="#ffcc11" stroke-width="7.6" stroke-linejoin="round"/>
<polyline points="951.3,1829.7 958.5,1822.1 965.6,1823.0 972.8,1816.4" fill="none" stroke="#ffcc11" stroke-width="7.6" stroke-linejoin="round"/>
<polyline points="1001.4,1884.7 1008.6,1870.4" fill="none" stroke="#ffcc11" stroke-width="7.6" stroke-linejoin="round"/>
<polyline points="1030.1,1871.5 1037.2,1867.7 1044.4,1852.4" fill="none" stroke="#ffcc11" stroke-width="7.6" stroke-linejoin="round"/>
<polyline points="586.1,1906.6 593.3,1909.3 600.4,1919.0 607.6,1927.4 614.7,1932.2 621.9,1937.9 629.1,1949.2 636.2,1966.4 643.4,1988.1 650.6,1996.7 657.7,2011.0 664.9,2007.2 672.0,1999.6 679.2,1994.8 686.4,1991.0 693.5,1984.3 700.7,1975.9 707.8,1963.5 715.0,1951.1 722.2,1938.7 729.3,1924.6 736.5,1911.2 743.6,1898.0 750.8,1888.5 758.0,1880.9 765.1,1874.1 772.3,1861.0 779.4,1865.8 786.6,1869.6 793.8,1869.1 800.9,1871.5 808.1,1875.3 815.3,1878.0 822.4,1879.4 829.6,1894.2 836.7,1911.2 843.9,1934.1 851.1,1933.1 858.2,1924.6 865.4,1919.0 872.5,1922.7 879.7,1925.5 886.9,1924.6 894.0,1927.4 901.2,1911.2 908.3,1896.1 915.5,1892.3 922.7,1879.0 929.8,1874.2 937.0,1872.3 944.1,1861.8 951.3,1859.6 958.5,1859.6 965.6,1861.3 972.8,1863.7 979.9,1868.0 987.1,1869.1 994.3,1875.3 1001.4,1879.9 1008.6,1884.7 1015.8,1889.4 1022.9,1903.6 1030.1,1917.1 1037.2,1925.5 1044.4,1925.5 1051.6,1936.0 1058.7,1941.7 1065.9,1948.4 1073.0,1962.5 1080.2,1971.1 1087.4,1973.8 1094.5,1961.6 1101.7,1948.4 1108.8,1939.8 1116.0,1940.6 1123.2,1928.4 1130.3,1920.8 1137.5,1918.4 1144.6,1908.5 1151.8,1913.1 1159.0,1922.7 1166.1,1936.8 1173.3,1944.6 1180.5,1951.1 1187.6,1963.5 1194.8,1975.4 1201.9,1979.7 1209.1,1985.3 1216.3,1994.8 1223.4,1988.1 1230.6,1981.6 1237.7,1972.1 1244.9,1978.6 1252.1,1981.6 1259.2,1977.8 1266.4,1975.9 1273.5,1974.0 1280.7,1974.9 1287.9,1974.0 1295.0,1984.3 1302.2,1993.8 1309.3,2003.4 1316.5,1999.6 1323.7,1998.6 1330.8,1998.6 1338.0,2003.4 1345.2,2001.5 1352.3,1997.7 1359.5,1992.9 1366.6,1987.2 1373.8,1980.5" fill="none" stroke="#616161" stroke-width="3.2" stroke-linejoin="round"/>
<rect x="562" y="1734" width="20" height="20" fill="#01a4a4"/>
<rect x="731.8" y="1734" width="20" height="20" fill="#ffcc11"/>
<rect x="843.8" y="1734" width="20" height="20" fill="#ff0000"/>
<rect x="939.7" y="1734" width="20" height="20" fill="#616161"/>
<polygon points="1547.9,2062.6 1547.9,2056.1 1555.9,2056.1 1563.9,1938.3 1571.9,2057.4 1579.9,1828.8 1587.9,2057.4 1595.9,2056.7 1603.9,2056.1 1611.9,2057.4 1619.9,2050.2 1627.9,2057.4 1635.9,2057.4 1643.9,2055.0 1651.9,2014.4 1659.9,2003.4 1667.9,2056.1 1675.9,2055.4 1683.9,2055.4 1691.9,2054.7 1699.9,2048.5 1707.9,2057.1 1715.9,2057.1 1723.9,2057.4 1731.9,2057.4 1739.9,2057.4 1747.9,1952.7 1755.9,2057.1 1763.9,2058.1 1771.9,2057.4 1779.9,2055.4 1787.9,2011.3 1795.9,1902.5 1803.9,2057.4 1811.9,2057.4 1819.9,2056.7 1827.9,2056.7 1835.9,1961.7 1843.9,2056.1 1851.9,2057.4 1859.9,2056.1 1867.9,2056.7 1875.9,2057.1 1883.9,1929.0 1891.9,2057.4 1899.9,2057.4 1907.9,2056.7 1915.9,2039.5 1923.9,2057.4 1931.9,2057.4 1939.9,2054.7 1947.9,1971.7 1955.9,2057.4 1963.9,2057.4 1971.9,2056.7 1979.9,2054.7 1987.9,2056.1 1995.9,2055.4 2003.9,2056.7 2011.9,2056.7 2019.9,2049.2 2027.8,2045.0 2035.8,2053.0 2043.8,2057.1 2051.8,2057.4 2059.8,2056.1 2067.8,1954.8 2075.8,2051.6 2083.8,2043.7 2091.8,2055.4 2099.8,2054.0 2107.8,2055.0 2115.8,2056.4 2123.8,2057.4 2131.8,2002.3 2139.8,1946.5 2147.8,2057.4 2155.8,2046.4 2163.8,2056.7 2171.8,2056.1 2179.8,2055.0 2187.8,2055.0 2195.8,2055.0 2203.8,2055.0 2211.8,2056.1 2219.8,1843.9 2227.8,2057.4 2235.8,2056.1 2243.8,2051.6 2251.8,2056.7 2259.8,2047.1 2267.8,2057.4 2275.8,2054.0 2283.8,2056.4 2291.8,2056.7 2299.8,2056.1 2307.8,2057.1 2315.8,2056.4 2323.8,2054.0 2331.8,2055.4 2339.8,2050.2 2347.8,1985.5 2355.8,2055.4 2363.8,2054.0 2371.8,2054.7 2379.8,2057.4 2387.8,1765.7 2395.8,2045.0 2403.8,2055.0 2411.8,2056.7 2419.8,2050.5 2427.8,2056.4 2435.8,2057.1 2443.8,2055.0 2451.8,2028.5 2459.8,2055.4 2467.8,2056.7 2475.8,2054.0 2483.8,1919.0 2491.8,2040.2 2499.8,2062.6 2499.8,2062.6" fill="rgba(0,128,0,0.2)"/>
<polygon points="1547.9,2062.6 1547.9,2104.6 1555.9,2104.6 1563.9,2107.6 1571.9,2104.0 1579.9,2105.8 1587.9,2103.7 1595.9,2104.3 1603.9,2105.2 1611.9,2103.7 1619.9,2118.6 1627.9,2102.8 1635.9,2104.0 1643.9,2108.2 1651.9,2106.4 1659.9,2105.8 1667.9,2107.3 1675.9,2107.6 1683.9,2107.6 1691.9,2108.8 1699.9,2108.8 1707.9,2105.2 1715.9,2105.2 1723.9,2103.7 1731.9,2103.7 1739.9,2103.4 1747.9,2105.2 1755.9,2104.0 1763.9,2103.4 1771.9,2103.7 1779.9,2104.6 1787.9,2114.7 1795.9,2110.6 1803.9,2104.0 1811.9,2104.0 1819.9,2104.6 1827.9,2118.0 1835.9,2108.2 1843.9,2107.6 1851.9,2104.6 1859.9,2107.0 1867.9,2107.0 1875.9,2104.6 1883.9,2105.2 1891.9,2104.0 1899.9,2103.7 1907.9,2104.6 1915.9,2107.3 1923.9,2103.7 1931.9,2104.0 1939.9,2104.3 1947.9,2105.8 1955.9,2103.7 1963.9,2103.7 1971.9,2104.3 1979.9,2104.3 1987.9,2107.3 1995.9,2108.8 2003.9,2105.8 2011.9,2106.7 2019.9,2107.6 2027.8,2111.8 2035.8,2104.6 2043.8,2104.3 2051.8,2104.3 2059.8,2104.3 2067.8,2105.8 2075.8,2105.8 2083.8,2108.8 2091.8,2105.2 2099.8,2106.7 2107.8,2108.2 2115.8,2107.0 2123.8,2104.3 2131.8,2120.1 2139.8,2111.2 2147.8,2104.3 2155.8,2109.1 2163.8,2105.2 2171.8,2104.3 2179.8,2107.0 2187.8,2107.6 2195.8,2111.8 2203.8,2110.3 2211.8,2108.8 2219.8,2110.6 2227.8,2104.3 2235.8,2105.8 2243.8,2107.3 2251.8,2105.2 2259.8,2106.7 2267.8,2105.2 2275.8,2113.2 2283.8,2107.6 2291.8,2107.6 2299.8,2109.7 2307.8,2107.3 2315.8,2107.6 2323.8,2112.1 2331.8,2111.2 2339.8,2114.7 2347.8,2118.0 2355.8,2111.2 2363.8,2112.7 2371.8,2112.1 2379.8,2107.6 2387.8,2110.6 2395.8,2110.3 2403.8,2108.2 2411.8,2108.2 2419.8,2108.8 2427.8,2108.2 2435.8,2107.6 2443.8,2109.1 2451.8,2135.6 2459.8,2111.8 2467.8,2108.8 2475.8,2110.3 2483.8,2115.0 2491.8,2096.3 2499.8,2062.0 2499.8,2062.6" fill="rgba(0,0,255,0.2)"/>
<line x1="1540.5" y1="1718.4" x2="2499.8" y2="1718.4" stroke="rgba(0,0,0,0.16)" stroke-width="2"/>
<text x="1530" y="1725.9" font-size="24" fill="#444" text-anchor="end">10.0</text>
<line x1="1540.5" y1="1804.44" x2="2499.8" y2="1804.44" stroke="rgba(0,0,0,0.16)" stroke-width="2"/>
<text x="1530" y="1811.94" font-size="24" fill="#444" text-anchor="end">7.5</text>
<line x1="1540.5" y1="1890.48" x2="2499.8" y2="1890.48" stroke="rgba(0,0,0,0.16)" stroke-width="2"/>
<text x="1530" y="1897.98" font-size="24" fill="#444" text-anchor="end">5.0</text>
<line x1="1540.5" y1="1976.52" x2="2499.8" y2="1976.52" stroke="rgba(0,0,0,0.16)" stroke-width="2"/>
<text x="1530" y="1984.02" font-size="24" fill="#444" text-anchor="end">2.5</text>
<line x1="1540.5" y1="2062.56" x2="2499.8" y2="2062.56" stroke="rgba(0,0,0,0.16)" stroke-width="2"/>
<text x="1530" y="2070.06" font-size="24" fill="#444" text-anchor="end">0.0</text>
<line x1="1540.5" y1="2148.6000000000004" x2="2499.8" y2="2148.6000000000004" stroke="rgba(0,0,0,0.16)" stroke-width="2"/>
<text x="1530" y="2156.1000000000004" font-size="24" fill="#444" text-anchor="end">-2.5</text>
<line x1="1687.0" y1="2148" x2="1687.0" y2="2158" stroke="rgba(0,0,0,0.16)" stroke-width="2"/>
<text x="1687.0" y="2191.5" font-size="24" fill="#444" text-anchor="middle">09:20:00</text>
<line x1="1846.98" y1="2148" x2="1846.98" y2="2158" stroke="rgba(0,0,0,0.16)" stroke-width="2"/>
<text x="1846.98" y="2191.5" font-size="24" fill="#444" text-anchor="middle">09:30:00</text>
<line x1="2006.96" y1="2148" x2="2006.96" y2="2158" stroke="rgba(0,0,0,0.16)" stroke-width="2"/>
<text x="2006.96" y="2191.5" font-size="24" fill="#444" text-anchor="middle">09:40:00</text>
<line x1="2166.94" y1="2148" x2="2166.94" y2="2158" stroke="rgba(0,0,0,0.16)" stroke-width="2"/>
<text x="2166.94" y="2191.5" font-size="24" fill="#444" text-anchor="middle">09:50:00</text>
<line x1="2326.92" y1="2148" x2="2326.92" y2="2158" stroke="rgba(0,0,0,0.16)" stroke-width="2"/>
<text x="2326.92" y="2191.5" font-size="24" fill="#444" text-anchor="middle">10:00:00</text>
<line x1="2486.9" y1="2148" x2="2486.9" y2="2158" stroke="rgba(0,0,0,0.16)" stroke-width="2"/>
<text x="2486.9" y="2191.5" font-size="24" fill="#444" text-anchor="middle">10:10:00</text>
<polyline points="1547.9,2056.1 1555.9,2056.1 1563.9,1938.3 1571.9,2057.4 1579.9,1828.8 1587.9,2057.4 1595.9,2056.7 1603.9,2056.1 1611.9,2057.4 1619.9,2050.2 1627.9,2057.4 1635.9,2057.4 1643.9,2055.0 1651.9,2014.4 1659.9,2003.4 1667.9,2056.1 1675.9,2055.4 1683.9,2055.4 1691.9,2054.7 1699.9,2048.5 1707.9,2057.1 1715.9,2057.1 1723.9,2057.4 1731.9,2057.4 1739.9,2057.4 1747.9,1952.7 1755.9,2057.1 1763.9,2058.1 1771.9,2057.4 1779.9,2055.4 1787.9,2011.3 1795.9,1902.5 1803.9,2057.4 1811.9,2057.4 1819.9,2056.7 1827.9,2056.7 1835.9,1961.7 1843.9,2056.1 1851.9,2057.4 1859.9,2056.1 1867.9,2056.7 1875.9,2057.1 1883.9,1929.0 1891.9,2057.4 1899.9,2057.4 1907.9,2056.7 1915.9,2039.5 1923.9,2057.4 1931.9,2057.4 1939.9,2054.7 1947.9,1971.7 1955.9,2057.4 1963.9,2057.4 1971.9,2056.7 1979.9,2054.7 1987.9,2056.1 1995.9,2055.4 2003.9,2056.7 2011.9,2056.7 2019.9,2049.2 2027.8,2045.0 2035.8,2053.0 2043.8,2057.1 2051.8,2057.4 2059.8,2056.1 2067.8,1954.8 2075.8,2051.6 2083.8,2043.7 2091.8,2055.4 2099.8,2054.0 2107.8,2055.0 2115.8,2056.4 2123.8,2057.4 2131.8,2002.3 2139.8,1946.5 2147.8,2057.4 2155.8,2046.4 2163.8,2056.7 2171.8,2056.1 2179.8,2055.0 2187.8,2055.0 2195.8,2055.0 2203.8,2055.0 2211.8,2056.1 2219.8,1843.9 2227.8,2057.4 2235.8,2056.1 2243.8,2051.6 2251.8,2056.7 2259.8,2047.1 2267.8,2057.4 2275.8,2054.0 2283.8,2056.4 2291.8,2056.7 2299.8,2056.1 2307.8,2057.1 2315.8,2056.4 2323.8,2054.0 2331.8,2055.4 2339.8,2050.2 2347.8,1985.5 2355.8,2055.4 2363.8,2054.0 2371.8,2054.7 2379.8,2057.4 2387.8,1765.7 2395.8,2045.0 2403.8,2055.0 2411.8,2056.7 2419.8,2050.5 2427.8,2056.4 2435.8,2057.1 2443.8,2055.0 2451.8,2028.5 2459.8,2055.4 2467.8,2056.7 2475.8,2054.0 2483.8,1919.0 2491.8,2040.2 2499.8,2062.6" fill="none" stroke="#008000" stroke-width="2"/>
<polyline points="1547.9,2104.6 1555.9,2104.6 1563.9,2107.6 1571.9,2104.0 1579.9,2105.8 1587.9,2103.7 1595.9,2104.3 1603.9,2105.2 1611.9,2103.7 1619.9,2118.6 1627.9,2102.8 1635.9,2104.0 1643.9,2108.2 1651.9,2106.4 1659.9,2105.8 1667.9,2107.3 1675.9,2107.6 1683.9,2107.6 1691.9,2108.8 1699.9,2108.8 1707.9,2105.2 1715.9,2105.2 1723.9,2103.7 1731.9,2103.7 1739.9,2103.4 1747.9,2105.2 1755.9,2104.0 1763.9,2103.4 1771.9,2103.7 1779.9,2104.6 1787.9,2114.7 1795.9,2110.6 1803.9,2104.0 1811.9,2104.0 1819.9,2104.6 1827.9,2118.0 1835.9,2108.2 1843.9,2107.6 1851.9,2104.6 1859.9,2107.0 1867.9,2107.0 1875.9,2104.6 1883.9,2105.2 1891.9,2104.0 1899.9,2103.7 1907.9,2104.6 1915.9,2107.3 1923.9,2103.7 1931.9,2104.0 1939.9,2104.3 1947.9,2105.8 1955.9,2103.7 1963.9,2103.7 1971.9,2104.3 1979.9,2104.3 1987.9,2107.3 1995.9,2108.8 2003.9,2105.8 2011.9,2106.7 2019.9,2107.6 2027.8,2111.8 2035.8,2104.6 2043.8,2104.3 2051.8,2104.3 2059.8,2104.3 2067.8,2105.8 2075.8,2105.8 2083.8,2108.8 2091.8,2105.2 2099.8,2106.7 2107.8,2108.2 2115.8,2107.0 2123.8,2104.3 2131.8,2120.1 2139.8,2111.2 2147.8,2104.3 2155.8,2109.1 2163.8,2105.2 2171.8,2104.3 2179.8,2107.0 2187.8,2107.6 2195.8,2111.8 2203.8,2110.3 2211.8,2108.8 2219.8,2110.6 2227.8,2104.3 2235.8,2105.8 2243.8,2107.3 2251.8,2105.2 2259.8,2106.7 2267.8,2105.2 2275.8,2113.2 2283.8,2107.6 2291.8,2107.6 2299.8,2109.7 2307.8,2107.3 2315.8,2107.6 2323.8,2112.1 2331.8,2111.2 2339.8,2114.7 2347.8,2118.0 2355.8,2111.2 2363.8,2112.7 2371.8,2112.1 2379.8,2107.6 2387.8,2110.6 2395.8,2110.3 2403.8,2108.2 2411.8,2108.2 2419.8,2108.8 2427.8,2108.2 2435.8,2107.6 2443.8,2109.1 2451.8,2135.6 2459.8,2111.8 2467.8,2108.8 2475.8,2110.3 2483.8,2115.0 2491.8,2096.3 2499.8,2062.0" fill="none" stroke="#0000ff" stroke-width="2"/>
<rect x="1552" y="1734" width="20" height="20" fill="#008000"/>
<rect x="1738" y="1734" width="20" height="20" fill="#0000ff"/>
</svg>
</body></html>
